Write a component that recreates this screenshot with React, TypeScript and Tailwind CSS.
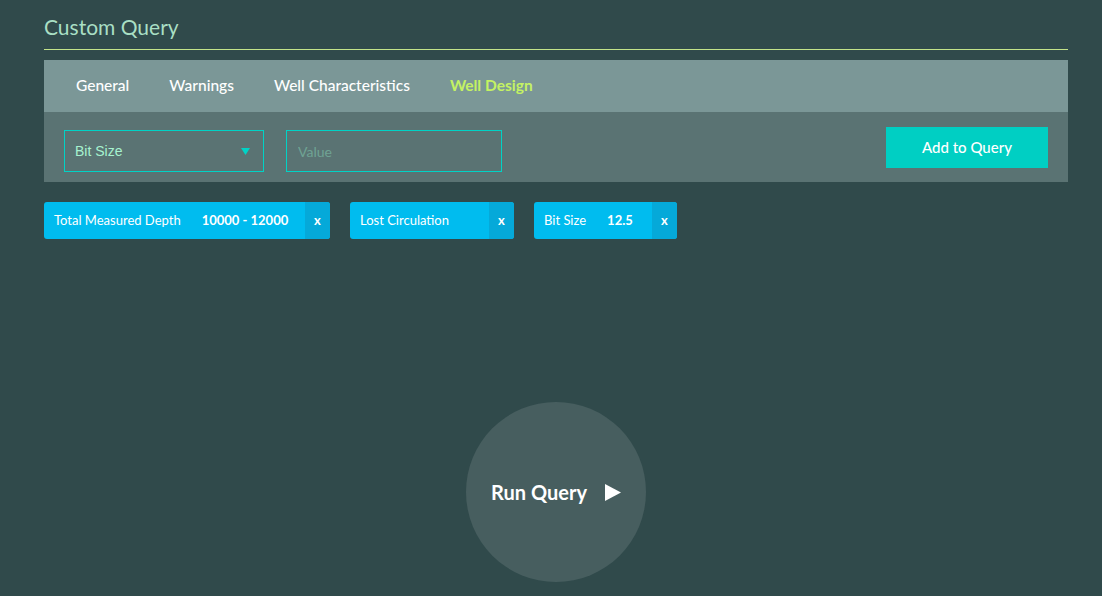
import { useState } from 'react';

type Filter = { label: string; value?: string; w: string };

const tabs = ['General', 'Warnings', 'Well Characteristics', 'Well Design'];

const initialFilters: Filter[] = [
  { label: 'Total Measured Depth', value: '10000 - 12000', w: 'w-[261px]' },
  { label: 'Lost Circulation', w: 'w-[139px]' },
  { label: 'Bit Size', value: '12.5', w: 'w-[118px]' },
];

export default function App() {
  const [active, setActive] = useState('Well Design');
  const [filters, setFilters] = useState(initialFilters);

  return (
    <div
      className="w-[1102px] h-[596px] overflow-hidden bg-[#304a4b] pl-[44px] pr-[34px] pt-[13px]"
      style={{ fontFamily: 'Lato, "Open Sans", sans-serif' }}
    >
      <h1 className="text-[21px] leading-[28px] text-[#a9dfc4] pb-[8px] border-b border-[#c3e38a]">
        Custom Query
      </h1>

      <div className="mt-[10px]">
        <div className="h-[52px] bg-[#7b9797] flex items-center pl-[32px] gap-[40px]">
          {tabs.map((t) => (
            <button
              key={t}
              onClick={() => setActive(t)}
              className={
                t === active
                  ? 'text-[15.5px] font-bold text-[#c4f263]'
                  : 'text-[15.5px] font-medium text-white'
              }
            >
              {t}
            </button>
          ))}
        </div>

        <div className="h-[70px] bg-[#5a7373] flex items-start pt-[15px] px-[20px]">
          <div className="mt-[3px] w-[200px] h-[42px] border border-[#00d3c6] flex items-center justify-between px-[10px]">
            <span className="text-[14px] text-[#a6f2cf]" style={{ fontFamily: '"Liberation Sans", Arial, sans-serif' }}>
              Bit Size
            </span>
            <svg width="9" height="7" viewBox="0 0 9 7" className="mr-[3px]">
              <polygon points="0,0 9,0 4.5,7" fill="#00d3c6" />
            </svg>
          </div>
          <input
            placeholder="Value"
            className="mt-[3px] ml-[22px] w-[216px] h-[42px] bg-transparent border border-[#00d3c6] px-[11px] text-[14px] text-white placeholder:text-[#6fa394] outline-none"
          />
          <button className="ml-auto w-[162px] h-[41px] bg-[#00cfc3] text-white text-[15px] font-medium">
            Add to Query
          </button>
        </div>
      </div>

      <div className="mt-[20px] flex gap-[20px]">
        {filters.map((f, i) => (
          <div key={i} className="h-[37px] flex rounded-[3px] overflow-hidden bg-[#00bcef] text-white text-[13px]">
            <div className={`${f.w} flex items-center pl-[10px]`}>
              <span>{f.label}</span>
              {f.value && <span className="ml-[21px] font-bold">{f.value}</span>}
            </div>
            <button
              onClick={() => setFilters(filters.filter((_, j) => j !== i))}
              className="w-[25px] bg-[#05a9d9] flex items-center justify-center text-[13px] font-bold"
            >
              x
            </button>
          </div>
        ))}
      </div>

      <div className="flex justify-center mt-[163px]">
        <button className="w-[180px] h-[180px] rounded-full bg-[#475e5f] flex items-center justify-center gap-[18px] text-white">
          <span className="text-[20px] font-bold">Run Query</span>
          <svg width="16" height="17" viewBox="0 0 16 17">
            <polygon points="0,0 16,8.5 0,17" fill="#ffffff" />
          </svg>
        </button>
      </div>
    </div>
  );
}
